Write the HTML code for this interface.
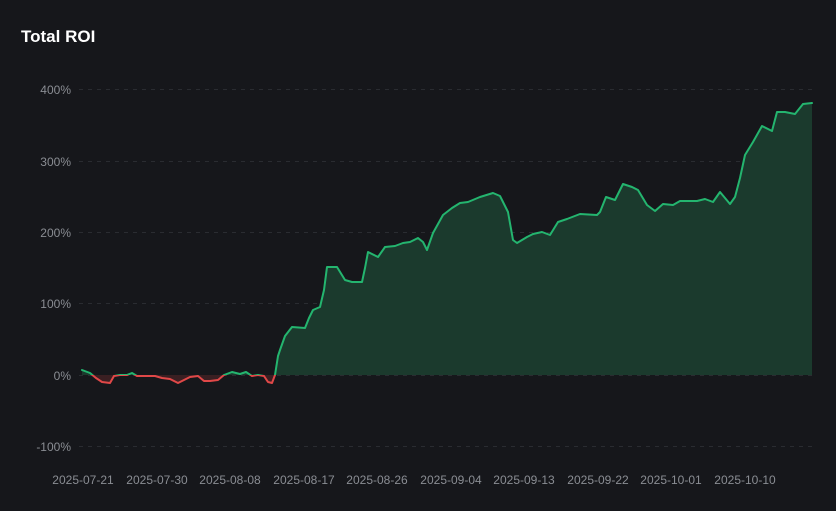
<!DOCTYPE html>
<html><head><meta charset="utf-8"><style>
html,body{margin:0;padding:0;background:#16171b;width:836px;height:511px;overflow:hidden}
.t{position:absolute;left:21px;top:27px;font:bold 17px "Liberation Sans",sans-serif;color:#fff}
</style></head><body>
<div class="t">Total ROI</div>
<svg width="836" height="511" style="position:absolute;left:0;top:0" font-family="Liberation Sans, sans-serif">
<defs>
<clipPath id="up"><rect x="0" y="0" width="836" height="375"/></clipPath>
<clipPath id="dn"><rect x="0" y="375" width="836" height="136"/></clipPath>
<polygon id="area" points="82,375 82,370 90,373 96,378 102,382 110,383 114,376 120,375 127,375 132,373 137,376 145,376 155,376 162,378 170,379 178,383 184,380 190,377 198,376 204,381 210,381 218,380 224,375 232,372 240,374 246,372 252,376 258,375 264,376 268,382 272,383 275,375 278,356 280,350 285,336 292,327 305,328 309,318 313,310 320,307 324,290 327,267 337,267 345,280 352,282 362,282 365,268 368,252 378,257 385,247 395,246 403,243 410,242 418,238 423,242 427,250 433,233 443,215 452,208 460,203 468,202 480,197 493,193 500,196 508,212 513,240 517,243 527,237 533,234 542,232 550,235 558,222 567,219 580,214 597,215 600,212 606,197 615,200 623,184 632,187 638,190 647,205 655,211 663,204 673,205 680,201 697,201 705,199 713,202 720,192 730,204 735,197 740,178 745,155 753,142 762,126 772,131 777,112 785,112 795,114 803,104 812,103 812,375"/>
<polyline id="ln" fill="none" stroke-width="2" stroke-linejoin="round" stroke-linecap="round" points="82,370 90,373 96,378 102,382 110,383 114,376 120,375 127,375 132,373 137,376 145,376 155,376 162,378 170,379 178,383 184,380 190,377 198,376 204,381 210,381 218,380 224,375 232,372 240,374 246,372 252,376 258,375 264,376 268,382 272,383 275,375 278,356 280,350 285,336 292,327 305,328 309,318 313,310 320,307 324,290 327,267 337,267 345,280 352,282 362,282 365,268 368,252 378,257 385,247 395,246 403,243 410,242 418,238 423,242 427,250 433,233 443,215 452,208 460,203 468,202 480,197 493,193 500,196 508,212 513,240 517,243 527,237 533,234 542,232 550,235 558,222 567,219 580,214 597,215 600,212 606,197 615,200 623,184 632,187 638,190 647,205 655,211 663,204 673,205 680,201 697,201 705,199 713,202 720,192 730,204 735,197 740,178 745,155 753,142 762,126 772,131 777,112 785,112 795,114 803,104 812,103"/>
</defs>
<g stroke="#2a2c31" stroke-width="1" stroke-dasharray="4 5">
<line x1="79" y1="89.5" x2="815" y2="89.5"/>
<line x1="79" y1="161.5" x2="815" y2="161.5"/>
<line x1="79" y1="232.5" x2="815" y2="232.5"/>
<line x1="79" y1="303.5" x2="815" y2="303.5"/>
<line x1="79" y1="375.5" x2="815" y2="375.5"/>
<line x1="79" y1="446.5" x2="815" y2="446.5"/>
</g>
<g fill="#8a8d93" font-size="12" text-anchor="end">
<text x="71" y="94">400%</text>
<text x="71" y="166">300%</text>
<text x="71" y="237">200%</text>
<text x="71" y="308">100%</text>
<text x="71" y="380">0%</text>
<text x="71" y="451">-100%</text>
</g>
<g fill="#8a8d93" font-size="12" text-anchor="middle">
<text x="83" y="484">2025-07-21</text>
<text x="157" y="484">2025-07-30</text>
<text x="230" y="484">2025-08-08</text>
<text x="304" y="484">2025-08-17</text>
<text x="377" y="484">2025-08-26</text>
<text x="451" y="484">2025-09-04</text>
<text x="524" y="484">2025-09-13</text>
<text x="598" y="484">2025-09-22</text>
<text x="671" y="484">2025-10-01</text>
<text x="745" y="484">2025-10-10</text>
</g>
<use href="#area" fill="#1b3a2d" clip-path="url(#up)"/>
<use href="#area" fill="#3a1f22" clip-path="url(#dn)"/>
<use href="#ln" stroke="#24b56f" clip-path="url(#up)"/>
<use href="#ln" stroke="#e04848" clip-path="url(#dn)"/>
</svg>
</body></html>
